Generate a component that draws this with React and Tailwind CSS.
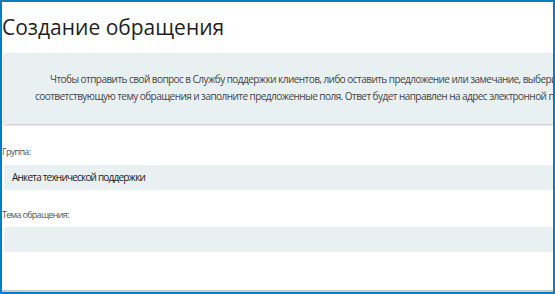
export default function App() {
  return (
    <div className="w-[555px] h-[294px] border-2 border-[#0a7cc1] bg-white overflow-hidden flex flex-col" style={{ fontFamily: '"Open Sans", "Noto Sans", sans-serif' }}>
      <div className="flex-1 flex flex-col overflow-hidden">
        <div className="h-[51px] flex items-center shrink-0">
          <h1 className="text-[21px] leading-none text-[#1f1f1f] font-normal whitespace-nowrap">Создание обращения</h1>
        </div>
        <div className="ml-[2px] h-[71px] shrink-0 bg-[#e9f0f2] shadow-[0_1px_2px_rgba(0,0,0,0.25)] pt-[18px] text-[10px] leading-[17px] text-[#444] tracking-[-0.55px] whitespace-nowrap overflow-hidden">
          <div className="pl-[46px]">Чтобы отправить свой вопрос в Службу поддержки клиентов, либо оставить предложение или замечание, выберите</div>
          <div className="pl-[31px]">соответствующую тему обращения и заполните предложенные поля. Ответ будет направлен на адрес электронной почты</div>
        </div>
        <div className="mt-[21px] text-[9px] leading-[14px] text-[#555] tracking-[-0.7px]">Группа:</div>
        <div className="mt-[6px] ml-[2px] h-[25px] shrink-0 bg-[#e9f0f2] flex items-center pl-[8px] text-[10px] text-[#1a1a1a] tracking-[-0.8px]">Анкета технической поддержки</div>
        <div className="mt-[18px] text-[9px] leading-[14px] text-[#555] tracking-[-0.7px]">Тема обращения:</div>
        <div className="mt-[5px] ml-[2px] h-[25px] shrink-0 bg-[#e9f0f2]"></div>
      </div>
      <div className="h-[2px] bg-[#c9c9c9] shrink-0"></div>
    </div>
  );
}
